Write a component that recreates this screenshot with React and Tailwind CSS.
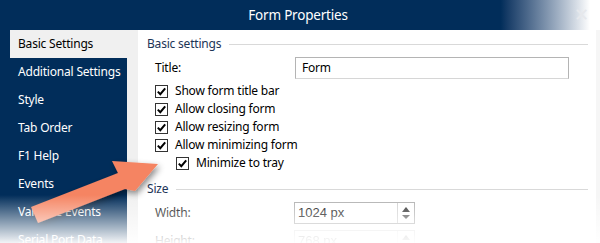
import React from "react";

function Check() {
  return (
    <span className="flex h-[13px] w-[13px] items-center justify-center border border-[#333] bg-white">
      <svg width="11" height="11" viewBox="0 0 11 11">
        <path d="M1.8 5.6 L4.3 8.2 L9.2 2.4" fill="none" stroke="#000" strokeWidth="2" />
      </svg>
    </span>
  );
}

function CheckRow({ label, indent }) {
  return (
    <div className={"flex h-[18px] items-center gap-[7px] " + (indent ? "pl-[21px]" : "")}>
      <Check />
      <span className="text-[12px] tracking-[-0.2px] text-black">{label}</span>
    </div>
  );
}

function GroupHeader({ label }) {
  return (
    <div className="flex h-[26px] shrink-0 items-center gap-[8px] pl-[9px]">
      <span className="text-[12px] tracking-[-0.2px] text-[#1d3557]">{label}</span>
      <div className="h-px flex-1 bg-[#d9d9d9]" />
    </div>
  );
}

function Spinner({ value, faded }) {
  return (
    <div className={"flex h-[22px] w-[121px] border border-[#adadad] bg-white " + (faded ? "opacity-40" : "")}>
      <div className="flex flex-1 items-center pl-[3px] font-['Liberation_Sans',Arial,sans-serif] text-[13px] text-black">{value}</div>
      <div className="flex w-[17px] flex-col items-center justify-center gap-[3px] border-l border-[#cfcfcf]">
        <svg width="8" height="5" viewBox="0 0 8 5"><path d="M0 5 L4 0 L8 5Z" fill="#222" /></svg>
        <svg width="8" height="4" viewBox="0 0 8 4"><path d="M0 0 L8 0 L4 4Z" fill="#444" /></svg>
      </div>
    </div>
  );
}

export default function App() {
  const items = [
    "Basic Settings",
    "Additional Settings",
    "Style",
    "Tab Order",
    "F1 Help",
    "Events",
    "Variable Events",
    "Serial Port Data",
  ];
  return (
    <div className="relative h-[243px] w-[600px] overflow-hidden bg-white font-['Noto_Sans','Open_Sans',sans-serif]">
      <div className="flex h-full w-[596px] flex-col">
        {/* title bar */}
        <div className="relative flex h-[30px] shrink-0 items-center justify-center bg-linear-to-r from-[#012d5a] from-[84%] to-white to-[99%]">
          <span className="text-[13.5px] tracking-[-0.2px] text-white">Form Properties</span>
          <span className="absolute right-[7px] top-[5px] text-[18px] leading-none text-[#e6e8ec]">✕</span>
        </div>
        <div className="flex min-h-0 flex-1 overflow-hidden">
          {/* sidebar */}
          <div className="flex w-[138px] shrink-0 bg-[#f0f0f0]">
            <div className="flex w-[127px] flex-col bg-[#012d5a]">
              {items.map((it, i) => (
                <div
                  key={it}
                  className={
                    "flex h-[28px] shrink-0 items-center whitespace-nowrap text-[12px] tracking-[-0.2px] " +
                    (i === 0 ? "ml-[10px] mr-[-11px] bg-[#f0f0f0] pl-[8px] text-black" : "pl-[18px] text-white")
                  }
                >
                  {it}
                </div>
              ))}
            </div>
          </div>
          {/* content */}
          <div className="flex flex-1 flex-col pr-[8px] pt-[1px]">
            <GroupHeader label="Basic settings" />
            <div className="flex h-[22px] shrink-0 items-center pl-[17px] pr-[19px]">
              <span className="w-[140px] text-[12px] tracking-[-0.2px] text-black">Title:</span>
              <div className="flex h-[22px] flex-1 items-center border border-[#b4b4b4] border-b-[#d6d6d6] pl-[6px] text-[12px] tracking-[-0.2px] text-black">Form</div>
            </div>
            <div className="flex shrink-0 flex-col pl-[17px] pt-[3px]">
              <CheckRow label="Show form title bar" />
              <CheckRow label="Allow closing form" />
              <CheckRow label="Allow resizing form" />
              <CheckRow label="Allow minimizing form" />
              <CheckRow label="Minimize to tray" indent />
            </div>
            <div className="h-[4px] shrink-0" />
            <GroupHeader label="Size" />
            <div className="flex h-[22px] shrink-0 items-center pl-[17px]">
              <span className="w-[139px] text-[12px] tracking-[-0.2px] text-black">Width:</span>
              <Spinner value="1024 px" />
            </div>
            <div className="mt-[6px] flex h-[22px] shrink-0 items-center pl-[17px]">
              <span className="w-[139px] text-[12px] tracking-[-0.2px] text-black">Height:</span>
              <Spinner value="768 px" faded />
            </div>
          </div>
        </div>
      </div>
      {/* window right edge shadow */}
      <div className="absolute right-0 top-[30px] h-full w-[4px] bg-[#f6f6f6]" />
      {/* arrow annotation */}
      <svg className="pointer-events-none absolute left-0 top-0" width="600" height="243" viewBox="0 0 600 243">
        <defs>
          <filter id="sh" x="-20%" y="-20%" width="140%" height="140%">
            <feDropShadow dx="2" dy="3" stdDeviation="3" floodColor="#000" floodOpacity="0.45" />
          </filter>
        </defs>
        <polygon
          points="31,207 118,173 112,161 158,164 135,191 125,189 38,223"
          fill="#f58462"
          filter="url(#sh)"
        />
      </svg>
      {/* bottom fade */}
      <div className="pointer-events-none absolute bottom-0 left-0 h-[48px] w-full bg-linear-to-b from-white/0 to-white/95" />
    </div>
  );
}
